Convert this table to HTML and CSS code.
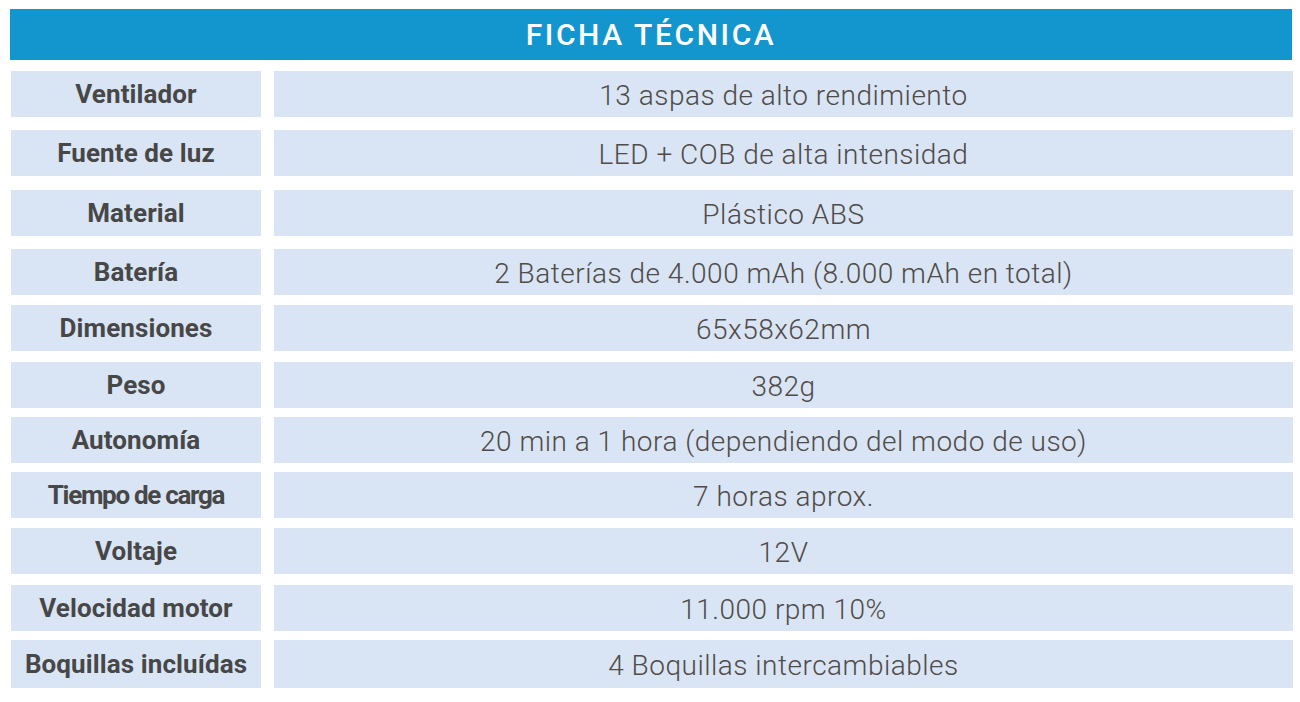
FILE: index.html
```html
<!DOCTYPE html>
<html lang="es">
<head>
<meta charset="utf-8">
<title>Ficha técnica</title>
<link rel="stylesheet" href="styles.css">
</head>
<body>
<div class="sheet">
  <h1 class="title">FICHA TÉCNICA</h1>
  <div class="specs">
    <div class="label">Ventilador</div><div class="value">13 aspas de alto rendimiento</div>
    <div class="label">Fuente de luz</div><div class="value">LED + COB de alta intensidad</div>
    <div class="label">Material</div><div class="value">Plástico ABS</div>
    <div class="label">Batería</div><div class="value">2 Baterías de 4.000 mAh (8.000 mAh en total)</div>
    <div class="label">Dimensiones</div><div class="value">65x58x62mm</div>
    <div class="label">Peso</div><div class="value">382g</div>
    <div class="label">Autonomía</div><div class="value">20 min a 1 hora (dependiendo del modo de uso)</div>
    <div class="label label-tight">Tiempo de carga</div><div class="value">7 horas aprox.</div>
    <div class="label">Voltaje</div><div class="value">12V</div>
    <div class="label">Velocidad motor</div><div class="value">11.000 rpm 10%</div>
    <div class="label">Boquillas incluídas</div><div class="value">4 Boquillas intercambiables</div>
  </div>
</div>
</body>
</html>
```

FILE: styles.css
```css
html, body {
  margin: 0;
  padding: 0;
  background: #ffffff;
}

body {
  width: 1300px;
  height: 702px;
  overflow: hidden;
  font-family: Roboto, "Liberation Sans", sans-serif;
}

.sheet {
  padding: 9px 8px 0 10px;
}

.title {
  margin: 0;
  height: 51px;
  width: 1282px;
  background: #1395cd;
  color: #ffffff;
  font-family: Roboto, "Liberation Sans", sans-serif;
  font-weight: 500;
  font-size: 30px;
  letter-spacing: 2.6px;
  line-height: 52px;
  text-align: center;
}

.specs {
  margin-top: 11px;
  margin-left: 1px;
  display: grid;
  grid-template-columns: 250px 1019px;
  column-gap: 13px;
  grid-template-rows: 59px 60px 59px 56px 57px 55px 55px 56px 57px 55px 48px;
}

.label,
.value {
  align-self: start;
  height: 46px;
  background: #d9e5f4;
  display: flex;
  align-items: center;
  justify-content: center;
  white-space: nowrap;
}

.specs > :nth-last-child(-n+2) {
  height: 48px;
}

.label {
  color: #474747;
  font-weight: 700;
  font-size: 26px;
  letter-spacing: 0.1px;
}

.label-tight {
  letter-spacing: -1.3px;
}

.value {
  color: #504b48;
  font-weight: 300;
  font-size: 28px;
  letter-spacing: 0.5px;
  padding-top: 3px;
  box-sizing: border-box;
}
```
